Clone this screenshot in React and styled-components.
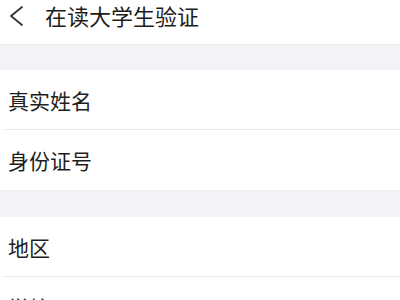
import React from 'react';
import styled, { createGlobalStyle } from 'styled-components';

const GlobalStyle = createGlobalStyle`
  html, body {
    margin: 0;
    padding: 0;
    background: #ffffff;
    font-family: "Noto Sans CJK SC", "Noto Sans", sans-serif;
  }
`;

const Page = styled.div`
  width: 400px;
  height: 300px;
  overflow: hidden;
  background: #ffffff;
`;

const Header = styled.div`
  height: 44px;
  display: flex;
  align-items: flex-start;
  box-sizing: border-box;
  padding: 0 0 0 8px;
`;

const BackButton = styled.div`
  width: 37px;
  height: 32px;
  display: flex;
  align-items: center;
`;

const Title = styled.div`
  font-size: 22px;
  line-height: 30px;
  color: #1c1c1c;
`;

const Gap = styled.div`
  height: ${props => props.h}px;
  background: #f3f3f7;
  border-top: 1px solid #ececf0;
  box-sizing: border-box;
`;

const Group = styled.div`
  background: #ffffff;
`;

const Row = styled.div`
  height: 60px;
  display: flex;
  align-items: center;
  font-size: 21px;
  color: #1e1e1e;
  box-sizing: border-box;
  border-bottom: ${props => (props.last ? 'none' : '1px solid #e9e9ec')};
  margin-left: ${props => (props.last ? 0 : 4)}px;
  padding-left: ${props => (props.last ? 8 : 4)}px;
`;

const groups = [
  ['真实姓名', '身份证号'],
  ['地区', '学校'],
];

export default function App() {
  return (
    <Page>
      <GlobalStyle />
      <Header>
        <BackButton>
          <svg width="16" height="22" viewBox="0 0 16 22">
            <path d="M14 2 L3 11 L14 20" fill="none" stroke="#333" strokeWidth="1.8" strokeLinecap="round" strokeLinejoin="round" />
          </svg>
        </BackButton>
        <Title>在读大学生验证</Title>
      </Header>
      <Gap h={26} />
      <Group>
        {groups[0].map((t, i) => (
          <Row key={t} last={i === groups[0].length - 1}>{t}</Row>
        ))}
      </Group>
      <Gap h={27} />
      <Group>
        {groups[1].map((t, i) => (
          <Row key={t} last={i === groups[1].length - 1}>{t}</Row>
        ))}
      </Group>
    </Page>
  );
}
